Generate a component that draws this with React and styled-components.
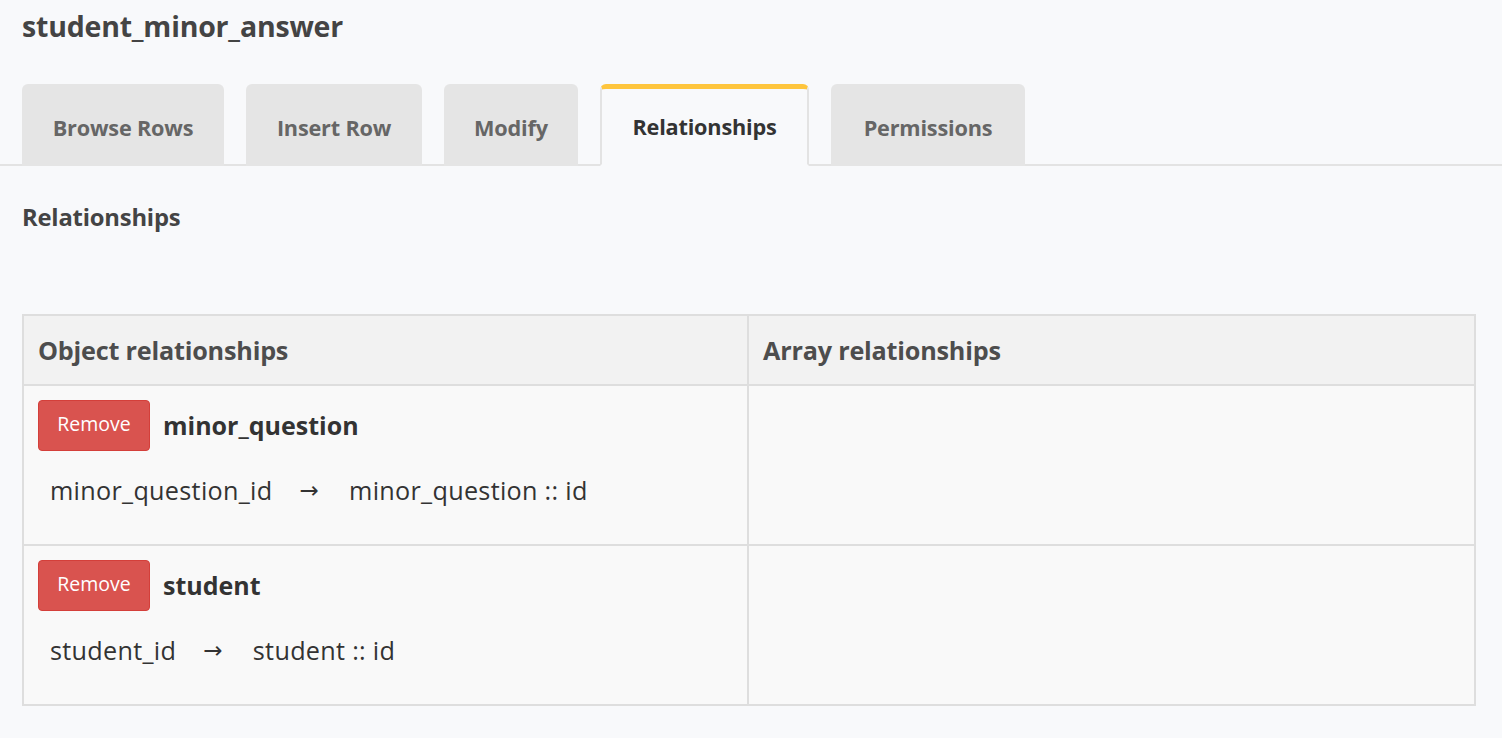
import React from "react";
import styled, { createGlobalStyle } from "styled-components";

const Global = createGlobalStyle`
  html, body { margin: 0; padding: 0; background: #f8f9fb; }
  body { font-family: "Open Sans", "Liberation Sans", sans-serif; color: #333; }
`;

const Page = styled.div`
  padding: 0 0 0 22px;
`;

const Title = styled.h1`
  margin: 0;
  padding-top: 8px;
  font-size: 28.5px;
  font-weight: 700;
  color: #444;
  line-height: 36px;
  letter-spacing: -0.2px;
`;

const TabBar = styled.div`
  display: flex;
  gap: 22px;
  margin-top: 40px;
  margin-left: -22px;
  padding-left: 22px;
  border-bottom: 2px solid #e3e3e3;
`;

const Tab = styled.div`
  height: 82px;
  box-sizing: border-box;
  width: ${(p) => p.w}px;
  display: flex;
  align-items: center;
  justify-content: center;
  border-radius: 6px 6px 0 0;
  font-size: 21.7px;
  font-weight: 700;
  letter-spacing: -0.2px;
  margin-bottom: -2px;
  background: ${(p) => (p.active ? "#f8f9fb" : "#e5e5e5")};
  color: ${(p) => (p.active ? "#333" : "#666")};
  border: ${(p) => (p.active ? "2px solid #e3e3e3" : "none")};
  border-top: ${(p) => (p.active ? "5px solid #fec53d" : "none")};
  border-bottom: ${(p) => (p.active ? "2px solid #f8f9fb" : "none")};
  padding-top: ${(p) => (p.active ? "0" : "4px")};
`;

const SectionTitle = styled.h2`
  margin: 38px 0 0;
  font-size: 23.8px;
  font-weight: 700;
  color: #444;
  line-height: 26px;
  letter-spacing: -0.2px;
`;

const Table = styled.div`
  margin-top: 84px;
  width: 1454px;
  box-sizing: border-box;
  border: 2px solid #dedede;
  display: grid;
  grid-template-columns: 725px 1fr;
`;

const HeadCell = styled.div`
  height: 70px;
  box-sizing: border-box;
  background: #f2f2f2;
  border-bottom: 2px solid #dedede;
  border-right: ${(p) => (p.last ? "none" : "2px solid #dedede")};
  display: flex;
  align-items: center;
  padding-left: 14px;
  font-size: 25.2px;
  font-weight: 700;
  letter-spacing: -0.2px;
  color: #4d4d4d;
`;

const Cell = styled.div`
  height: ${(p) => (p.bottom ? 158 : 160)}px;
  box-sizing: border-box;
  background: #f9f9f9;
  border-bottom: ${(p) => (p.bottom ? "none" : "2px solid #dedede")};
  border-right: ${(p) => (p.last ? "none" : "2px solid #dedede")};
  padding: 14px 14px 0 14px;
`;

const RelHead = styled.div`
  display: flex;
  align-items: center;
  gap: 13px;
`;

const RemoveButton = styled.button`
  width: 112px;
  height: 51px;
  background: #d9534f;
  border: 1px solid #d43f3a;
  border-radius: 4px;
  color: #fff;
  font-family: inherit;
  font-size: 19.5px;
  padding: 0 0 4px;
`;

const RelName = styled.span`
  font-size: 25px;
  font-weight: 700;
  color: #333;
  margin-top: -2px;
`;

const Mapping = styled.div`
  margin-top: 24px;
  padding-left: 12px;
  font-size: 25.2px;
  letter-spacing: 0.3px;
  color: #333;
  display: flex;
  align-items: center;
  line-height: 30px;
`;

const Arrow = styled.span`
  font-family: "DejaVu Sans", sans-serif;
  font-size: 23px;
  margin: 0 30px 0 27px;
  color: #333;
`;

const rels = [
  { name: "minor_question", from: "minor_question_id", to: "minor_question :: id" },
  { name: "student", from: "student_id", to: "student :: id" },
];

export default function App() {
  const tabs = [
    ["Browse Rows", 202],
    ["Insert Row", 176],
    ["Modify", 134],
    ["Relationships", 209, true],
    ["Permissions", 194],
  ];
  return (
    <>
      <Global />
      <Page>
        <Title>student_minor_answer</Title>
        <TabBar>
          {tabs.map(([t, w, a]) => (
            <Tab key={t} w={w} active={a}>
              {t}
            </Tab>
          ))}
        </TabBar>
        <SectionTitle>Relationships</SectionTitle>
        <Table>
          <HeadCell>Object relationships</HeadCell>
          <HeadCell last>Array relationships</HeadCell>
          {rels.map((r, i) => (
            <React.Fragment key={r.name}>
              <Cell bottom={i === rels.length - 1}>
                <RelHead>
                  <RemoveButton>Remove</RemoveButton>
                  <RelName>{r.name}</RelName>
                </RelHead>
                <Mapping>
                  <span>{r.from}</span>
                  <Arrow>→</Arrow>
                  <span>{r.to}</span>
                </Mapping>
              </Cell>
              <Cell last bottom={i === rels.length - 1} />
            </React.Fragment>
          ))}
        </Table>
      </Page>
    </>
  );
}
